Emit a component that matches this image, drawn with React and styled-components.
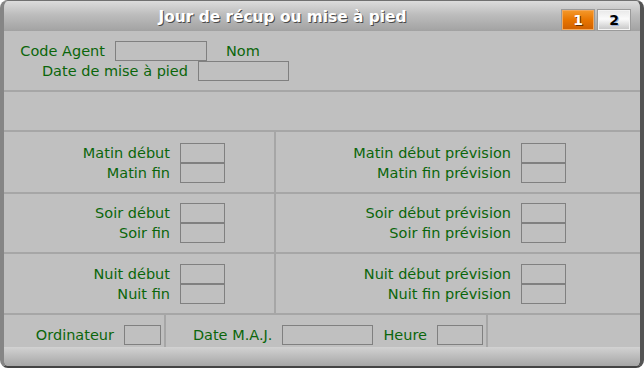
import React from "react";
import styled, { createGlobalStyle } from "styled-components";

const GlobalStyle = createGlobalStyle`
  html, body {
    margin: 0;
    padding: 0;
    background: #ffffff;
  }
  * { box-sizing: border-box; }
`;

const Window = styled.div`
  width: 644px;
  height: 368px;
  display: flex;
  flex-direction: column;
  background: #c0c0c0;
  border-top: 1px solid #707070;
  border-left: 4px solid #858585;
  border-right: 4px solid #545454;
  border-bottom: 2px solid #444444;
  border-radius: 8px;
  overflow: hidden;
  font-family: "DejaVu Sans", Verdana, sans-serif;
`;

const TitleBar = styled.div`
  height: 30px;
  flex: none;
  display: flex;
  align-items: center;
  padding-right: 9px;
  background: linear-gradient(#dcdcdc, #bdbdbd 45%, #a2a2a2);
`;

const Title = styled.div`
  flex: 1;
  text-align: center;
  color: #ffffff;
  font-weight: bold;
  font-size: 15.4px;
  padding-top: 1px;
  text-shadow: 1px 1px 0 #4a4a4a;
`;

const Tabs = styled.div`
  display: flex;
  gap: 2px;
  margin-top: 8px;
`;

const Tab = styled.div`
  width: 34px;
  height: 22px;
  display: flex;
  align-items: center;
  justify-content: center;
  font-weight: bold;
  font-size: 14px;
  border: 1px solid #9a9a9a;
  box-shadow: inset 0 0 0 1px ${p => (p.$active ? "#f3a85a" : "#f4f4f4")};
  background: ${p =>
    p.$active
      ? "linear-gradient(#f59a2c, #e87500 50%, #cf5f00)"
      : "linear-gradient(#e8e8e8, #fbfbfb 45%, #c4c4c4)"};
  color: ${p => (p.$active ? "#ffffff" : "#000000")};
  text-shadow: ${p => (p.$active ? "1px 1px 0 #6a3000" : "1px 1px 0 #9ab0d8")};
`;

const Body = styled.div`
  flex: 1;
  display: flex;
  flex-direction: column;
  gap: 2px;
  background: #a6a6a6;
`;

const Section = styled.div`
  background: #c0c0c0;
  height: ${p => p.$h}px;
  flex: none;
`;

const TopSection = styled(Section)`
  padding-top: 10px;
  display: flex;
  flex-direction: column;
`;

const FreeRow = styled.div`
  display: flex;
  align-items: center;
  height: 20px;
`;

const Label = styled.span`
  color: #0b660b;
  font-size: 14.5px;
  white-space: nowrap;
`;

const AnchoredLabel = styled(Label)`
  width: ${p => p.$w}px;
  text-align: right;
  padding-right: 10px;
`;

const Input = styled.div`
  width: ${p => p.$w}px;
  height: 20px;
  border: 1px solid #808080;
  background: #c0c0c0;
  flex: none;
`;

const NomLabel = styled(Label)`
  margin-left: 19px;
`;

const TimeGrid = styled.div`
  display: grid;
  grid-template-columns: 270px 1fr;
  grid-template-rows: 60px 58px 59px;
  gap: 2px;
  flex: none;
`;

const TimeCell = styled.div`
  background: #c0c0c0;
  display: grid;
  grid-template-columns: ${p => p.$labelEnd}px 45px;
  grid-template-rows: 20px 20px;
  align-content: center;
  padding-top: ${p => p.$nudge || 0}px;
`;

const CellLabel = styled(Label)`
  text-align: right;
  padding-right: 10px;
  line-height: 20px;
`;

const BottomRow = styled.div`
  display: grid;
  grid-template-columns: 160px 320px 1fr;
  gap: 2px;
  height: 32px;
  flex: none;
`;

const BottomCell = styled.div`
  background: #c0c0c0;
  display: flex;
  align-items: center;
  justify-content: flex-end;
  gap: 10px;
  padding-right: 3px;
  padding-top: 9px;
  padding-bottom: 2px;
`;

const Footer = styled.div`
  height: 19px;
  flex: none;
  background: linear-gradient(#d2d2d2, #bcbcbc 50%, #a6a6a6);
`;

const periods = [
  { name: "Matin", nudge: 1 },
  { name: "Soir", nudge: 0 },
  { name: "Nuit", nudge: 1 },
];

export default function App() {
  return (
    <>
      <GlobalStyle />
      <Window>
        <TitleBar>
          <Title>Jour de récup ou mise à pied</Title>
          <Tabs>
            <Tab $active>1</Tab>
            <Tab>2</Tab>
          </Tabs>
        </TitleBar>
        <Body>
          <TopSection $h={59}>
            <FreeRow>
              <AnchoredLabel $w={111}>Code Agent</AnchoredLabel>
              <Input $w={92} />
              <NomLabel>Nom</NomLabel>
            </FreeRow>
            <FreeRow>
              <AnchoredLabel $w={194}>Date de mise à pied</AnchoredLabel>
              <Input $w={91} />
            </FreeRow>
          </TopSection>
          <Section $h={38} />
          <TimeGrid>
            {periods.map(p => (
              <React.Fragment key={p.name}>
                <TimeCell $labelEnd={176} $nudge={p.nudge}>
                  <CellLabel>{p.name} début</CellLabel>
                  <Input $w={45} />
                  <CellLabel>{p.name} fin</CellLabel>
                  <Input $w={45} />
                </TimeCell>
                <TimeCell $labelEnd={245} $nudge={p.nudge}>
                  <CellLabel>{p.name} début prévision</CellLabel>
                  <Input $w={45} />
                  <CellLabel>{p.name} fin prévision</CellLabel>
                  <Input $w={45} />
                </TimeCell>
              </React.Fragment>
            ))}
          </TimeGrid>
          <BottomRow>
            <BottomCell>
              <Label>Ordinateur</Label>
              <Input $w={37} />
            </BottomCell>
            <BottomCell>
              <Label>Date M.A.J.</Label>
              <Input $w={91} />
              <Label>Heure</Label>
              <Input $w={46} />
            </BottomCell>
            <BottomCell />
          </BottomRow>
        </Body>
        <Footer />
      </Window>
    </>
  );
}
